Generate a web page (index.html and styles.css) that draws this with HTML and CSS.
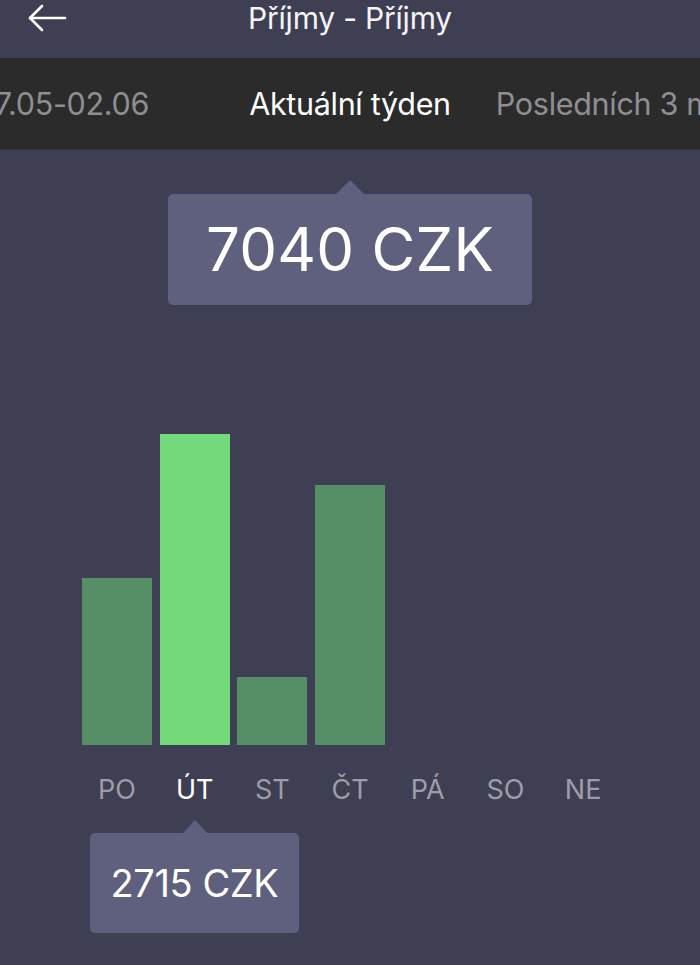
FILE: index.html
```html
<!DOCTYPE html>
<html lang="cs">
<head>
<meta charset="utf-8">
<title>Příjmy - Příjmy</title>
<link rel="stylesheet" href="styles.css">
</head>
<body>
<div class="app">
  <header class="topbar">
    <div class="back">
      <svg width="40" height="30" viewBox="0 0 40 30" fill="none" stroke="#ffffff" stroke-width="2.6" stroke-linecap="round" stroke-linejoin="round">
        <path d="M2 15 H37"/>
        <path d="M14 3 L2 15 L14 27"/>
      </svg>
    </div>
    <h1 class="title">Příjmy - Příjmy</h1>
    <div></div>
  </header>

  <nav class="tabs">
    <div class="tab-side tab-left"><span class="tab">27.05-02.06</span></div>
    <div class="tab tab-active">Aktuální týden</div>
    <div class="tab-side tab-right"><span class="tab">Posledních 3 měsíce</span></div>
  </nav>

  <main class="content">
    <div class="total tip">7040 CZK</div>

    <div class="chart">
      <div class="col"><div class="bar" style="height:167px"></div></div>
      <div class="col"><div class="bar bar-active" style="height:311px"></div></div>
      <div class="col"><div class="bar" style="height:68px"></div></div>
      <div class="col"><div class="bar" style="height:260px"></div></div>
      <div class="col"></div>
      <div class="col"></div>
      <div class="col"></div>

      <div class="day">PO</div>
      <div class="day day-active">ÚT</div>
      <div class="day">ST</div>
      <div class="day">ČT</div>
      <div class="day">PÁ</div>
      <div class="day">SO</div>
      <div class="day">NE</div>
    </div>

    <div class="daytip tip">2715 CZK</div>
  </main>
</div>
</body>
</html>
```

FILE: styles.css
```css
html, body {
  margin: 0;
  padding: 0;
}

body {
  background: #3f3f53;
  font-family: Inter, Roboto, "Liberation Sans", Arial, sans-serif;
  color: #ffffff;
  width: 700px;
  height: 965px;
  overflow: hidden;
}

.app {
  display: flex;
  flex-direction: column;
}

.topbar {
  height: 58px;
  display: grid;
  grid-template-columns: 1fr auto 1fr;
  align-items: start;
  background: #3f3f54;
}

.back {
  padding-left: 28px;
  padding-top: 3px;
  height: 30px;
}

.back svg {
  display: block;
}

.title {
  margin: 0;
  font-size: 30px;
  font-weight: 400;
  line-height: 36px;
  color: #f4f4f6;
  letter-spacing: -0.2px;
}

.tabs {
  height: 92px;
  background: #2b2b2c;
  display: grid;
  grid-template-columns: 1fr auto 1fr;
  align-items: center;
  border-bottom: 1px solid #353540;
  box-sizing: border-box;
}

.tab {
  font-size: 30.5px;
  line-height: 36px;
  color: #8f8f93;
  white-space: nowrap;
  letter-spacing: -0.3px;
}

.tab-active {
  color: #ffffff;
}

.tab-side {
  display: flex;
  overflow: hidden;
  min-width: 0;
}

.tab-left {
  justify-content: flex-end;
  padding-right: 100px;
}

.tab-right {
  justify-content: flex-start;
  padding-left: 45px;
}

.content {
  display: flex;
  flex-direction: column;
  padding-top: 44px;
}

.tip {
  position: relative;
  background: #5f5f7e;
  border-radius: 5px;
  color: #ffffff;
  box-sizing: border-box;
  text-align: center;
}

.tip::before {
  content: "";
  position: absolute;
  top: -14px;
  left: 50%;
  margin-left: -14px;
  border-left: 14px solid transparent;
  border-right: 14px solid transparent;
  border-bottom: 14px solid #5f5f7e;
}

.total {
  align-self: center;
  width: 364px;
  height: 111px;
  font-size: 60px;
  line-height: 111px;
  letter-spacing: 0.2px;
}

.chart {
  margin-left: 82px;
  display: grid;
  grid-template-columns: repeat(7, 70px);
  grid-template-rows: 440px 30px;
  column-gap: 7.7px;
  row-gap: 30px;
}

.col {
  display: flex;
  align-items: flex-end;
}

.bar {
  width: 100%;
  background: #568e66;
}

.bar-active {
  background: #74d97b;
}

.day {
  text-align: center;
  font-size: 27px;
  line-height: 30px;
  color: #9d9daa;
  margin: 0 -10px;
}

.day-active {
  color: #ffffff;
}

.daytip {
  margin-top: 28px;
  margin-left: 90px;
  width: 209px;
  height: 100px;
  font-size: 38px;
  line-height: 100px;
  letter-spacing: -0.4px;
}

.daytip::before {
  top: -13px;
  margin-left: -12px;
  border-left-width: 12px;
  border-right-width: 12px;
  border-bottom-width: 13px;
}
```
